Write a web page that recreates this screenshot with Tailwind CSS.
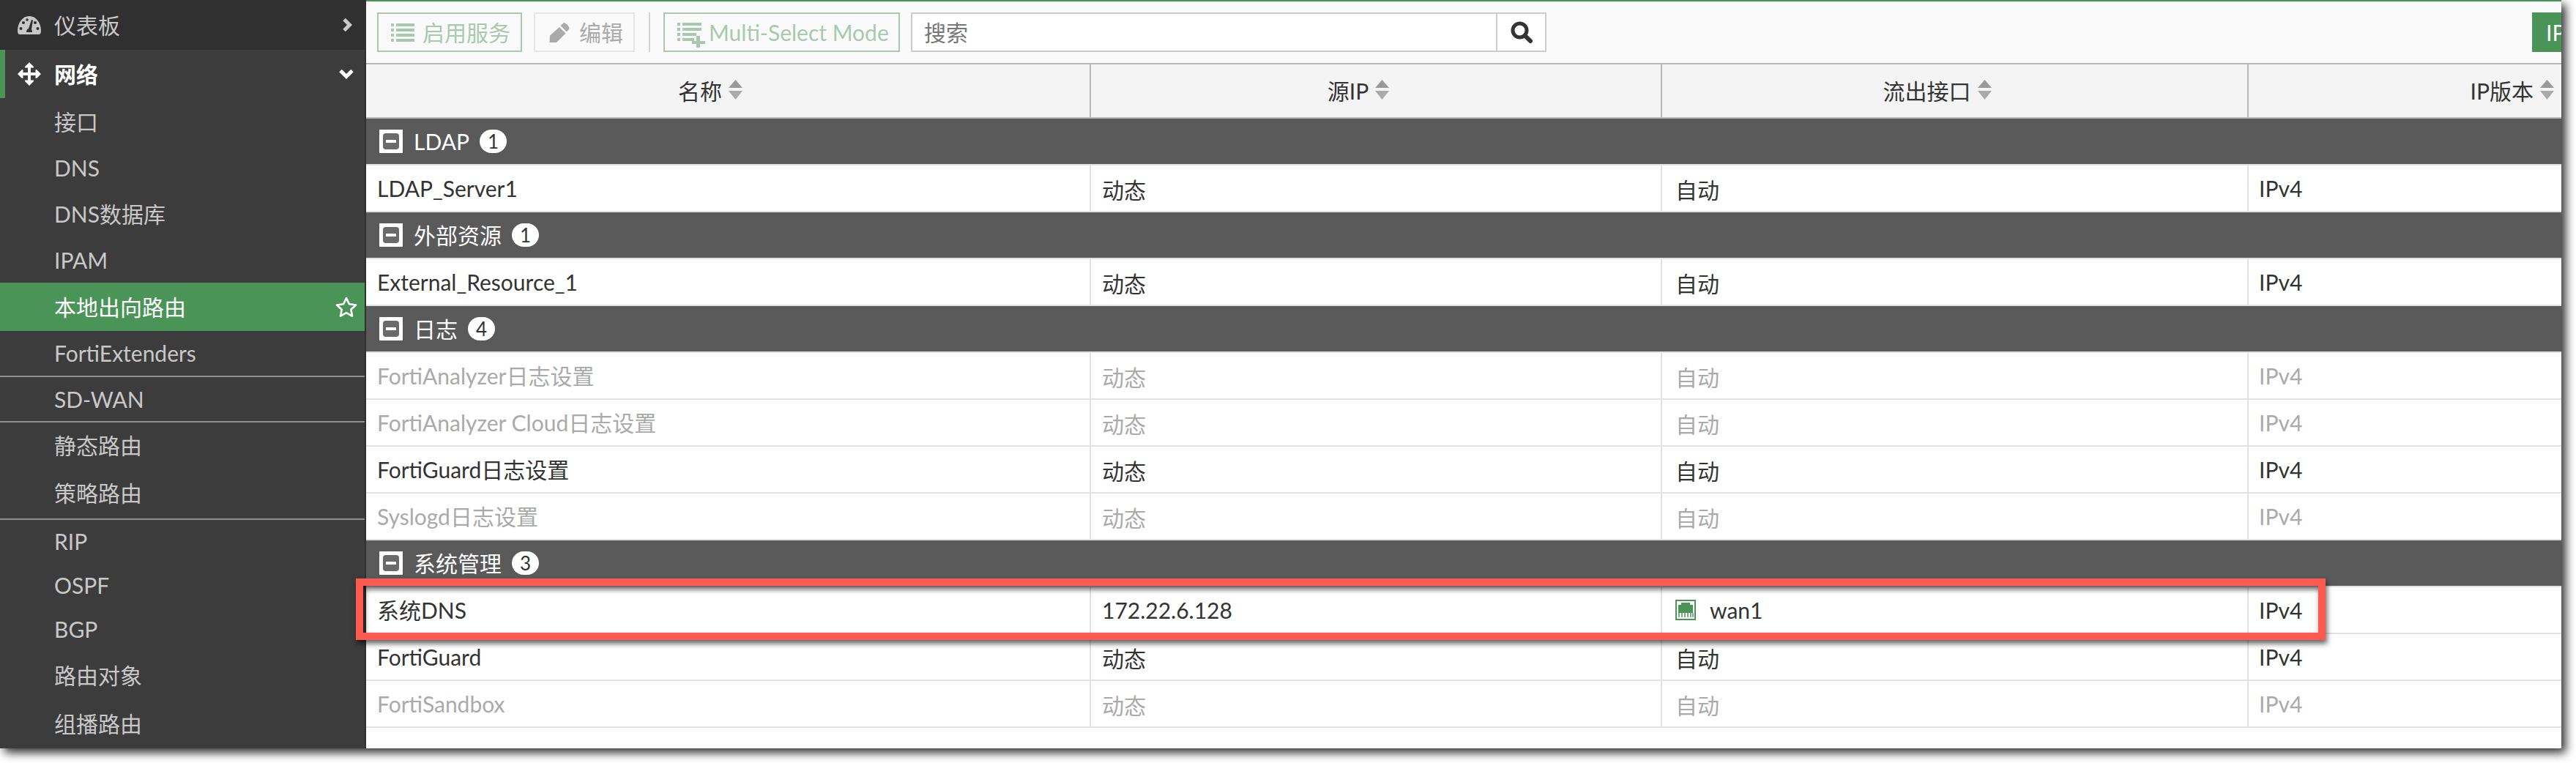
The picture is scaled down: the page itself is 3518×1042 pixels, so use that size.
<!DOCTYPE html>
<html lang="zh">
<head>
<meta charset="UTF-8">
<title>本地出向路由</title>
<script src="https://cdn.jsdelivr.net/npm/@tailwindcss/browser@4"></script>
</head>
<body class="bg-white w-[3518px] h-[1042px] overflow-hidden font-['Lato','Noto_Sans_CJK_SC',sans-serif] text-[30px] leading-none">

<div class="relative w-[3498px] h-[1022px] flex shadow-[6px_6px_12px_rgba(0,0,0,0.8)]">

  <!-- sidebar -->
  <aside class="w-[500px] h-full shrink-0 bg-[#3c3c3c] border-r-2 border-[#303030] text-[#c8c8c8] flex flex-col">
    <div class="h-[68px] bg-[#303030] flex items-center pl-[24px] pr-[17px]">
      <svg class="w-[32px] h-[25px] mr-[18px]" viewBox="0 0 32 25"><path fill="#c8c8c8" d="M3 25Q0 25 0 20C0 9 7 0 16 0S32 9 32 20Q32 25 29 25Z"/><g fill="#303030"><circle cx="4.500" cy="17" r="2"/><circle cx="8" cy="9" r="2"/><circle cx="27.500" cy="17" r="2"/><circle cx="24" cy="9" r="2"/><circle cx="13" cy="5" r="1.800"/><path d="M12 22Q12 18 15 17L19 5L21 5.500L19 18Q20 20 20 22Z"/></g></svg>
      <span>仪表板</span>
      <svg class="ml-auto w-[14px] h-[20px]" viewBox="0 0 14 20"><path d="M3 2.500L10.500 10L3 17.500" fill="none" stroke="#c8c8c8" stroke-width="5"/></svg>
    </div>
    <div class="h-[66px] border-l-[7px] border-[#4a9458] text-white font-bold flex items-center pl-[17px] pr-[15px]">
      <svg class="w-[32px] h-[32px] mr-[18px]" viewBox="0 0 32 32"><path fill="#fff" d="M16 0L22 6L22 7.500L18 7.500L18 14L24.500 14L24.500 10L26 10L32 16L26 22L24.500 22L24.500 18L18 18L18 24.500L22 24.500L22 26L16 32L10 26L10 24.500L14 24.500L14 18L7.500 18L7.500 22L6 22L0 16L6 10L7.500 10L7.500 14L14 14L14 7.500L10 7.500L10 6Z"/></svg>
      <span>网络</span>
      <svg class="ml-auto w-[20px] h-[14px]" viewBox="0 0 20 14"><path d="M2 2.500L10 10.500L18 2.500" fill="none" stroke="#fff" stroke-width="5"/></svg>
    </div>
    <div class="h-[63px] flex items-center pl-[74px]">接口</div>
    <div class="h-[63px] flex items-center pl-[74px]">DNS</div>
    <div class="h-[63px] flex items-center pl-[74px]">DNS数据库</div>
    <div class="h-[63px] flex items-center pl-[74px]">IPAM</div>
    <div class="h-[66px] bg-[#4a9458] text-white flex items-center pl-[74px] pr-[10px]">
      <span>本地出向路由</span>
      <svg class="ml-auto w-[30px] h-[28px]" viewBox="0 0 30 28"><path d="M15 2L18.900 10.300L28 11.500L21.300 17.700L23 26.600L15 22.200L7 26.600L8.700 17.700L2 11.500L11.100 10.300Z" fill="none" stroke="#fff" stroke-width="2.600" stroke-linejoin="round"/></svg>
    </div>
    <div class="h-[61px] flex items-center pl-[74px] pb-[2px]">FortiExtenders</div>
    <div class="h-[2px] bg-[#8f8f8f]"></div>
    <div class="h-[60px] flex items-center pl-[74px]">SD-WAN</div>
    <div class="h-[2px] bg-[#8f8f8f]"></div>
    <div class="h-[65px] flex items-center pl-[74px] pb-[4px]">静态路由</div>
    <div class="h-[66px] flex items-center pl-[74px] pb-[4px]">策略路由</div>
    <div class="h-[2px] bg-[#8f8f8f]"></div>
    <div class="h-[60px] flex items-center pl-[74px] pb-[2px]">RIP</div>
    <div class="h-[60px] flex items-center pl-[74px] pb-[2px]">OSPF</div>
    <div class="h-[60px] flex items-center pl-[74px] pb-[2px]">BGP</div>
    <div class="h-[67px] flex items-center pl-[74px] pb-[4px]">路由对象</div>
    <div class="h-[65px] flex items-center pl-[74px] pb-[4px]">组播路由</div>
  </aside>

  <!-- main -->
  <main class="flex-1 h-full bg-white overflow-hidden flex flex-col text-[#333]">
    <div class="h-[88px] shrink-0 bg-[#fafafa] border-t-2 border-b-2 border-t-[#4a9458] border-b-[#b8b8b8] flex items-center pl-[15px]">
      <div class="w-[198px] h-[54px] border-2 border-[#a7caae] text-[#a7caae] flex items-center pl-[17px]">
        <svg class="w-[32px] h-[25px] mr-[11px]" viewBox="0 0 32 25" fill="currentColor"><path d="M0 0h4v4H0zM7 0h25v4H7zM0 7h4v4H0zM7 7h25v4H7zM0 14h4v4H0zM7 14h25v4H7zM0 21h4v4H0zM7 21h25v4H7z"/></svg>
        <span>启用服务</span>
      </div>
      <div class="w-[138px] h-[54px] ml-[16px] border-2 border-[#e6e6e6] text-[#aaa] flex items-center pl-[19px]">
        <svg class="w-[28px] h-[27px] mr-[13px]" viewBox="0 0 28 27" fill="currentColor"><path d="M20 0Q22 0 25 3Q28 6 27.500 8L24 12.500L15.500 4ZM14 6L22.500 14.500L10 27L0.500 27L1 17.500Z"/></svg>
        <span>编辑</span>
      </div>
      <div class="w-[2px] h-[54px] ml-[19px] bg-[#d4d4d4]"></div>
      <div class="w-[323px] h-[54px] ml-[18px] border-2 border-[#a7caae] text-[#a7caae] flex items-center pl-[17px]">
        <svg class="w-[38px] h-[34px] mr-[5px] mt-[8px]" viewBox="0 0 38 34" fill="currentColor"><path d="M0 0h4v4H0zM7 0h26v4H7zM0 7h4v4H0zM7 7h26v4H7zM0 14h4v4H0zM7 14h19v4H7zM0 21h4v4H0zM7 21h16v4H7zM26 18h5v7h7v4h-7v5h-5v-5h-6v-4h6z"/></svg>
        <span>Multi-Select Mode</span>
      </div>
      <div class="w-[868px] h-[54px] ml-[15px] bg-white border-2 border-[#ccc] flex items-center">
        <span class="flex-1 pl-[16px] text-[#777]">搜索</span>
        <div class="w-[67px] h-full border-l-2 border-[#ccc] flex items-center justify-center">
          <svg class="w-[30px] h-[30px]" viewBox="0 0 30 30"><circle cx="12.500" cy="12.500" r="9.500" fill="none" stroke="#333" stroke-width="5"/><path d="M19.500 19.500L27 27" stroke="#333" stroke-width="6" stroke-linecap="round"/></svg>
        </div>
      </div>
      <div class="ml-auto w-[40px] h-[54px] bg-[#4a9458] text-white flex items-center pl-[19px] overflow-hidden whitespace-nowrap">IP</div>
    </div>

    <div class="h-[74px] shrink-0 bg-[#f4f4f4] border-b-2 border-[#b8b8b8] grid grid-cols-[990px_780px_801px_1fr]">
      <div class="border-r-2 border-[#b8b8b8] flex items-center justify-center pr-[48px] gap-[9px]">
        <span>名称</span>
        <svg class="w-[19px] h-[27px] -mt-[4px]" viewBox="0 0 19 27"><path fill="#999" d="M9.500 0L19 11H0Z"/><path fill="#aaa" d="M0 15H19L9.500 27Z"/></svg>
      </div>
      <div class="border-r-2 border-[#b8b8b8] flex items-center justify-center pr-[48px] gap-[9px]">
        <span>源IP</span>
        <svg class="w-[19px] h-[27px] -mt-[4px]" viewBox="0 0 19 27"><path fill="#999" d="M9.500 0L19 11H0Z"/><path fill="#aaa" d="M0 15H19L9.500 27Z"/></svg>
      </div>
      <div class="border-r-2 border-[#b8b8b8] flex items-center justify-center pr-[48px] gap-[9px]">
        <span>流出接口</span>
        <svg class="w-[19px] h-[27px] -mt-[4px]" viewBox="0 0 19 27"><path fill="#999" d="M9.500 0L19 11H0Z"/><path fill="#aaa" d="M0 15H19L9.500 27Z"/></svg>
      </div>
      <div class="flex items-center justify-end pr-[10px] gap-[9px]">
        <span>IP版本</span>
        <svg class="w-[19px] h-[27px] -mt-[4px]" viewBox="0 0 19 27"><path fill="#999" d="M9.500 0L19 11H0Z"/><path fill="#aaa" d="M0 15H19L9.500 27Z"/></svg>
      </div>
    </div>

    <!-- LDAP -->
    <div class="h-[64px] shrink-0 bg-[#5a5a5a] border-b-2 border-[#e2e2e2] text-white flex items-center pl-[18px]">
      <svg class="w-[32px] h-[32px] mr-[15px]" viewBox="0 0 32 32"><path fill="#fff" d="M0 0h32v32H0z"/><rect x="5" y="5" width="22" height="22" rx="4" fill="#6a6a6a"/><rect x="9" y="14" width="14" height="4" fill="#fff"/></svg>
      <span>LDAP</span>
      <span class="ml-[14px] w-[37px] h-[32px] rounded-full bg-white text-[#333] text-[26px] flex items-center justify-center">1</span>
    </div>
    <div class="h-[64px] shrink-0 border-b-2 border-[#e2e2e2] grid grid-cols-[990px_780px_801px_1fr]">
      <div class="border-r-2 border-[#e2e2e2] flex items-center pl-[15px]">LDAP_Server1</div>
      <div class="border-r-2 border-[#e2e2e2] flex items-center pl-[15px] pt-[4px]">动态</div>
      <div class="border-r-2 border-[#e2e2e2] flex items-center pl-[18px] pt-[4px]">自动</div>
      <div class="flex items-center pl-[14px]">IPv4</div>
    </div>

    <!-- external -->
    <div class="h-[64px] shrink-0 bg-[#5a5a5a] border-b-2 border-[#e2e2e2] text-white flex items-center pl-[18px]">
      <svg class="w-[32px] h-[32px] mr-[15px]" viewBox="0 0 32 32"><path fill="#fff" d="M0 0h32v32H0z"/><rect x="5" y="5" width="22" height="22" rx="4" fill="#6a6a6a"/><rect x="9" y="14" width="14" height="4" fill="#fff"/></svg>
      <span>外部资源</span>
      <span class="ml-[14px] w-[37px] h-[32px] rounded-full bg-white text-[#333] text-[26px] flex items-center justify-center">1</span>
    </div>
    <div class="h-[64px] shrink-0 border-b-2 border-[#e2e2e2] grid grid-cols-[990px_780px_801px_1fr]">
      <div class="border-r-2 border-[#e2e2e2] flex items-center pl-[15px]">External_Resource_1</div>
      <div class="border-r-2 border-[#e2e2e2] flex items-center pl-[15px] pt-[4px]">动态</div>
      <div class="border-r-2 border-[#e2e2e2] flex items-center pl-[18px] pt-[4px]">自动</div>
      <div class="flex items-center pl-[14px]">IPv4</div>
    </div>

    <!-- logs -->
    <div class="h-[64px] shrink-0 bg-[#5a5a5a] border-b-2 border-[#e2e2e2] text-white flex items-center pl-[18px]">
      <svg class="w-[32px] h-[32px] mr-[15px]" viewBox="0 0 32 32"><path fill="#fff" d="M0 0h32v32H0z"/><rect x="5" y="5" width="22" height="22" rx="4" fill="#6a6a6a"/><rect x="9" y="14" width="14" height="4" fill="#fff"/></svg>
      <span>日志</span>
      <span class="ml-[14px] w-[37px] h-[32px] rounded-full bg-white text-[#333] text-[26px] flex items-center justify-center">4</span>
    </div>
    <div class="h-[64px] shrink-0 border-b-2 border-[#e2e2e2] text-[#aaa] grid grid-cols-[990px_780px_801px_1fr]">
      <div class="border-r-2 border-[#e2e2e2] flex items-center pl-[15px]">FortiAnalyzer日志设置</div>
      <div class="border-r-2 border-[#e2e2e2] flex items-center pl-[15px] pt-[4px]">动态</div>
      <div class="border-r-2 border-[#e2e2e2] flex items-center pl-[18px] pt-[4px]">自动</div>
      <div class="flex items-center pl-[14px]">IPv4</div>
    </div>
    <div class="h-[64px] shrink-0 border-b-2 border-[#e2e2e2] text-[#aaa] grid grid-cols-[990px_780px_801px_1fr]">
      <div class="border-r-2 border-[#e2e2e2] flex items-center pl-[15px]">FortiAnalyzer Cloud日志设置</div>
      <div class="border-r-2 border-[#e2e2e2] flex items-center pl-[15px] pt-[4px]">动态</div>
      <div class="border-r-2 border-[#e2e2e2] flex items-center pl-[18px] pt-[4px]">自动</div>
      <div class="flex items-center pl-[14px]">IPv4</div>
    </div>
    <div class="h-[64px] shrink-0 border-b-2 border-[#e2e2e2] grid grid-cols-[990px_780px_801px_1fr]">
      <div class="border-r-2 border-[#e2e2e2] flex items-center pl-[15px]">FortiGuard日志设置</div>
      <div class="border-r-2 border-[#e2e2e2] flex items-center pl-[15px] pt-[4px]">动态</div>
      <div class="border-r-2 border-[#e2e2e2] flex items-center pl-[18px] pt-[4px]">自动</div>
      <div class="flex items-center pl-[14px]">IPv4</div>
    </div>
    <div class="h-[64px] shrink-0 border-b-2 border-[#e2e2e2] text-[#aaa] grid grid-cols-[990px_780px_801px_1fr]">
      <div class="border-r-2 border-[#e2e2e2] flex items-center pl-[15px]">Syslogd日志设置</div>
      <div class="border-r-2 border-[#e2e2e2] flex items-center pl-[15px] pt-[4px]">动态</div>
      <div class="border-r-2 border-[#e2e2e2] flex items-center pl-[18px] pt-[4px]">自动</div>
      <div class="flex items-center pl-[14px]">IPv4</div>
    </div>

    <!-- system -->
    <div class="h-[64px] shrink-0 bg-[#5a5a5a] border-b-2 border-[#e2e2e2] text-white flex items-center pl-[18px]">
      <svg class="w-[32px] h-[32px] mr-[15px]" viewBox="0 0 32 32"><path fill="#fff" d="M0 0h32v32H0z"/><rect x="5" y="5" width="22" height="22" rx="4" fill="#6a6a6a"/><rect x="9" y="14" width="14" height="4" fill="#fff"/></svg>
      <span>系统管理</span>
      <span class="ml-[14px] w-[37px] h-[32px] rounded-full bg-white text-[#333] text-[26px] flex items-center justify-center">3</span>
    </div>
    <div class="h-[64px] shrink-0 border-b-2 border-[#e2e2e2] grid grid-cols-[990px_780px_801px_1fr]">
      <div class="border-r-2 border-[#e2e2e2] flex items-center pl-[15px]">系统DNS</div>
      <div class="border-r-2 border-[#e2e2e2] flex items-center pl-[15px]">172.22.6.128</div>
      <div class="border-r-2 border-[#e2e2e2] flex items-center pl-[18px]">
        <svg class="w-[28px] h-[28px] mr-[19px]" viewBox="0 0 28 28"><rect x="1" y="1" width="26" height="26" fill="#fff" stroke="#4a9458" stroke-width="2"/><path fill="#4a9458" d="M4 7h4V4h12v3h4v11H4z"/><path stroke="#4a9458" stroke-width="1.500" d="M5 18v6M9 18v6M13 18v6M17 18v6M21 18v6M24 18v6"/></svg>
        <span>wan1</span>
      </div>
      <div class="flex items-center pl-[14px]">IPv4</div>
    </div>
    <div class="h-[64px] shrink-0 border-b-2 border-[#e2e2e2] grid grid-cols-[990px_780px_801px_1fr]">
      <div class="border-r-2 border-[#e2e2e2] flex items-center pl-[15px]">FortiGuard</div>
      <div class="border-r-2 border-[#e2e2e2] flex items-center pl-[15px] pt-[4px]">动态</div>
      <div class="border-r-2 border-[#e2e2e2] flex items-center pl-[18px] pt-[4px]">自动</div>
      <div class="flex items-center pl-[14px]">IPv4</div>
    </div>
    <div class="h-[64px] shrink-0 border-b-2 border-[#e2e2e2] text-[#aaa] grid grid-cols-[990px_780px_801px_1fr]">
      <div class="border-r-2 border-[#e2e2e2] flex items-center pl-[15px]">FortiSandbox</div>
      <div class="border-r-2 border-[#e2e2e2] flex items-center pl-[15px] pt-[4px]">动态</div>
      <div class="border-r-2 border-[#e2e2e2] flex items-center pl-[18px] pt-[4px]">自动</div>
      <div class="flex items-center pl-[14px]">IPv4</div>
    </div>
  </main>

  <!-- annotation rectangle -->
  <div class="absolute left-[486px] top-[790px] w-[2690px] h-[84px] border-[10px] border-[#ff5a4d] shadow-[2px_5px_7px_rgba(0,0,0,0.6),inset_2px_5px_7px_rgba(0,0,0,0.6)]"></div>
</div>
</body>
</html>
